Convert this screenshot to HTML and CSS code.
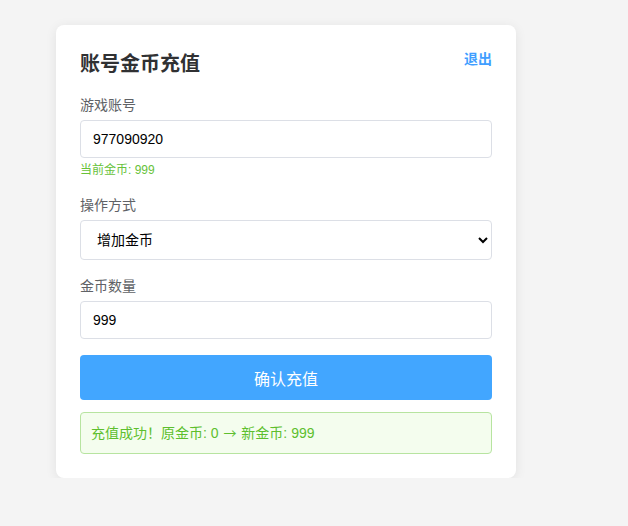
FILE: index.html
```html
<!DOCTYPE html>
<html lang="zh-CN">
<head>
<meta charset="utf-8">
<title>账号金币充值</title>
<link rel="stylesheet" href="styles.css">
</head>
<body>
<div class="card">
  <div class="header">
    <h2 class="title">账号金币充值</h2>
    <a class="logout" href="#">退出</a>
  </div>
  <div class="group">
    <label class="label">游戏账号</label>
    <input class="input" type="text" value="977090920">
    <div class="hint">当前金币: 999</div>
  </div>
  <div class="group">
    <label class="label">操作方式</label>
    <select class="select">
      <option>增加金币</option>
      <option>减少金币</option>
    </select>
  </div>
  <div class="group">
    <label class="label">金币数量</label>
    <input class="input" type="text" value="999">
  </div>
  <button class="btn">确认充值</button>
  <div class="msg">充值成功！原金币: 0 <span class="arrow">→</span> 新金币: 999</div>
</div>
</body>
</html>
```
FILE: styles.css
```css
* { box-sizing: border-box; }
body {
  margin: 0;
  padding: 25px 0 0 56px;
  background: #f4f4f4;
  font-family: "Liberation Sans", "Noto Sans CJK SC", sans-serif;
}
.card {
  width: 460px;
  background: #fff;
  border-radius: 8px;
  padding: 24px;
  box-shadow: 0 2px 12px rgba(0,0,0,0.08);
}
.header {
  display: flex;
  justify-content: space-between;
  align-items: flex-start;
  margin-bottom: 17px;
}
.title {
  margin: 0;
  font-size: 20px;
  line-height: 28px;
  padding-top: 1px;
  font-weight: bold;
  color: #303133;
}
.logout {
  font-size: 14px;
  line-height: 20px;
  font-weight: bold;
  color: #409eff;
  text-decoration: none;
}
.group { margin-bottom: 16px; }
.label {
  display: block;
  font-size: 14px;
  line-height: 20px;
  color: #606266;
  margin-bottom: 5px;
}
.input {
  display: block;
  width: 100%;
  height: 38px;
  padding: 0 12px;
  border: 1px solid #dcdfe6;
  border-radius: 4px;
  font-family: inherit;
  font-size: 14px;
  color: #000;
  outline: none;
}
.select {
  display: block;
  width: 100%;
  height: 40px;
  padding: 0 12px;
  border: 1px solid #dcdfe6;
  border-radius: 4px;
  background: #fff;
  font-family: inherit;
  font-size: 14px;
  color: #000;
}
.hint {
  margin-top: 4px;
  font-size: 12px;
  line-height: 17px;
  color: #67c23a;
}
.btn {
  display: block;
  width: 100%;
  height: 45px;
  border: none;
  border-radius: 4px;
  background: #42a6ff;
  color: #fff;
  font-family: inherit;
  font-size: 16px;
}
.msg {
  margin-top: 12px;
  padding: 10px;
  border: 1px solid #b7e4a0;
  border-radius: 4px;
  background: #f4fdee;
  color: #5dbf2d;
  font-size: 14px;
  line-height: 19px;
}
.arrow {
  font-family: "Noto Sans CJK SC", sans-serif;
  font-size: 13px;
  margin: 0 1px;
}
```
